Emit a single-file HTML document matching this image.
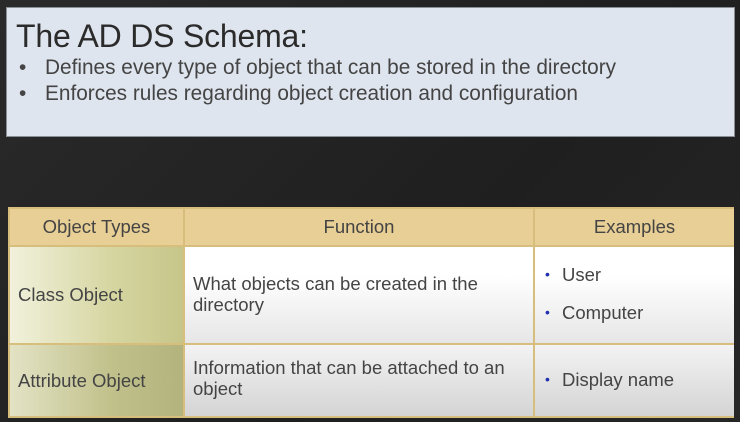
<!DOCTYPE html>
<html><head><meta charset="utf-8"><style>
body{margin:0;width:740px;height:422px;background:linear-gradient(135deg,#2a2a2a,#1f1f1f 60%,#262626);font-family:"Liberation Sans",sans-serif;overflow:hidden;position:relative}
.top{position:absolute;left:6px;top:7px;width:729px;height:130px;background:#dfe5ee;border:1px solid #8a8f96;box-sizing:border-box}
.title{position:absolute;left:9px;top:10px;font-size:32px;color:#2b2b2b;letter-spacing:-0.2px}
.b{position:absolute;left:12px;font-size:20.8px;color:#444}
.b span{position:absolute;left:26px;white-space:nowrap}
.tbl{position:absolute;left:8px;top:207px;width:726px;height:211px;border:2px solid #d8be7c;box-sizing:border-box;background:#fff}
.c{position:absolute;box-sizing:border-box;border-right:2px solid #d8be7c;border-bottom:2px solid #d8be7c;color:#444;font-size:18.5px}
.h{background:#e8cf95;text-align:center;line-height:36px;height:38px;top:0}
.t{position:absolute;left:8px;white-space:nowrap;font-size:18.5px;color:#444}
.dot{color:#2030b0;font-size:14px;position:absolute;left:0;top:2px}
</style></head><body>
<div class="top">
<div class="title">The AD DS Schema:</div>
<div class="b" style="top:48px">•<span>Defines every type of object that can be stored in the directory</span></div>
<div class="b" style="top:74px">•<span>Enforces rules regarding object creation and configuration</span></div>
</div>
<div class="tbl">
<div class="c h" style="left:0;width:175px">Object Types</div>
<div class="c h" style="left:175px;width:350px">Function</div>
<div class="c h" style="left:525px;width:199px;border-right:none">Examples</div>
<div class="c" style="left:0;top:38px;width:175px;height:98px;background:linear-gradient(90deg,#f1f1dc,#d5d5a0 60%,#c6c68a)"><div class="t" style="top:37px">Class Object</div></div>
<div class="c" style="left:175px;top:38px;width:350px;height:98px;background:linear-gradient(180deg,#fff 30%,#e6e6e6)"><div class="t" style="top:26px;line-height:21px">What objects can be created in the<br>directory</div></div>
<div class="c" style="left:525px;top:38px;width:199px;height:98px;border-right:none;background:linear-gradient(180deg,#fff 30%,#e6e6e6)"><div class="t" style="top:17px;left:10px"><span class="dot">•</span><span style="margin-left:17px">User</span></div><div class="t" style="top:55px;left:10px"><span class="dot">•</span><span style="margin-left:17px">Computer</span></div></div>
<div class="c" style="left:0;top:136px;width:175px;height:71px;border-bottom:none;background:linear-gradient(90deg,#e3e3c5,#c0c08a 60%,#b3b37e)"><div class="t" style="top:25px">Attribute Object</div></div>
<div class="c" style="left:175px;top:136px;width:350px;height:71px;border-bottom:none;background:linear-gradient(180deg,#f3f3f3,#d4d4d4)"><div class="t" style="top:12px;line-height:21px">Information that can be attached to an<br>object</div></div>
<div class="c" style="left:525px;top:136px;width:199px;height:71px;border:none;background:linear-gradient(180deg,#f3f3f3,#d4d4d4)"><div class="t" style="top:24px;left:10px"><span class="dot">•</span><span style="margin-left:17px">Display name</span></div></div>
</div>
</body></html>
